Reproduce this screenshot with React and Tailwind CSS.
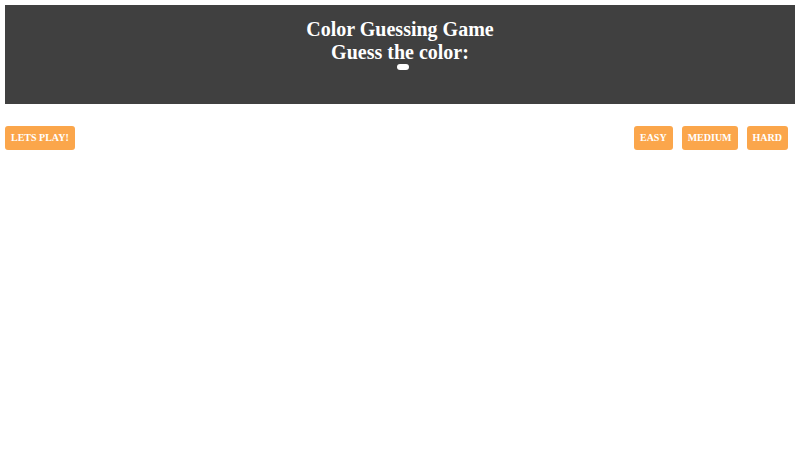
import React from 'react';

const LEVELS = ['EASY', 'MEDIUM', 'HARD'];

const Btn = ({ children }) => (
  <button className="h-6 px-[6px] rounded-[3px] bg-[#fba64b] text-white text-[10px] font-bold leading-none">
    {children}
  </button>
);

export default function App() {
  return (
    <div className="min-h-[450px] bg-white font-['Liberation_Serif',serif]">
      <header className="mx-[5px] mt-[5px] h-[99px] bg-[#404040] text-white flex flex-col items-center pt-[13px]">
        <h1 className="text-[20px] font-bold leading-[23px]">Color Guessing Game</h1>
        <h2 className="text-[20px] font-bold leading-[23px]">Guess the color:</h2>
        <span className="mt-0 ml-[5px] w-3 h-[6px] rounded-full bg-white" />
      </header>
      <div className="flex justify-between px-[5px] mt-[22px]">
        <Btn>LETS PLAY!</Btn>
        <div className="flex gap-[9px] mr-[7px]">
          {LEVELS.map((l) => (
            <Btn key={l}>{l}</Btn>
          ))}
        </div>
      </div>
    </div>
  );
}
